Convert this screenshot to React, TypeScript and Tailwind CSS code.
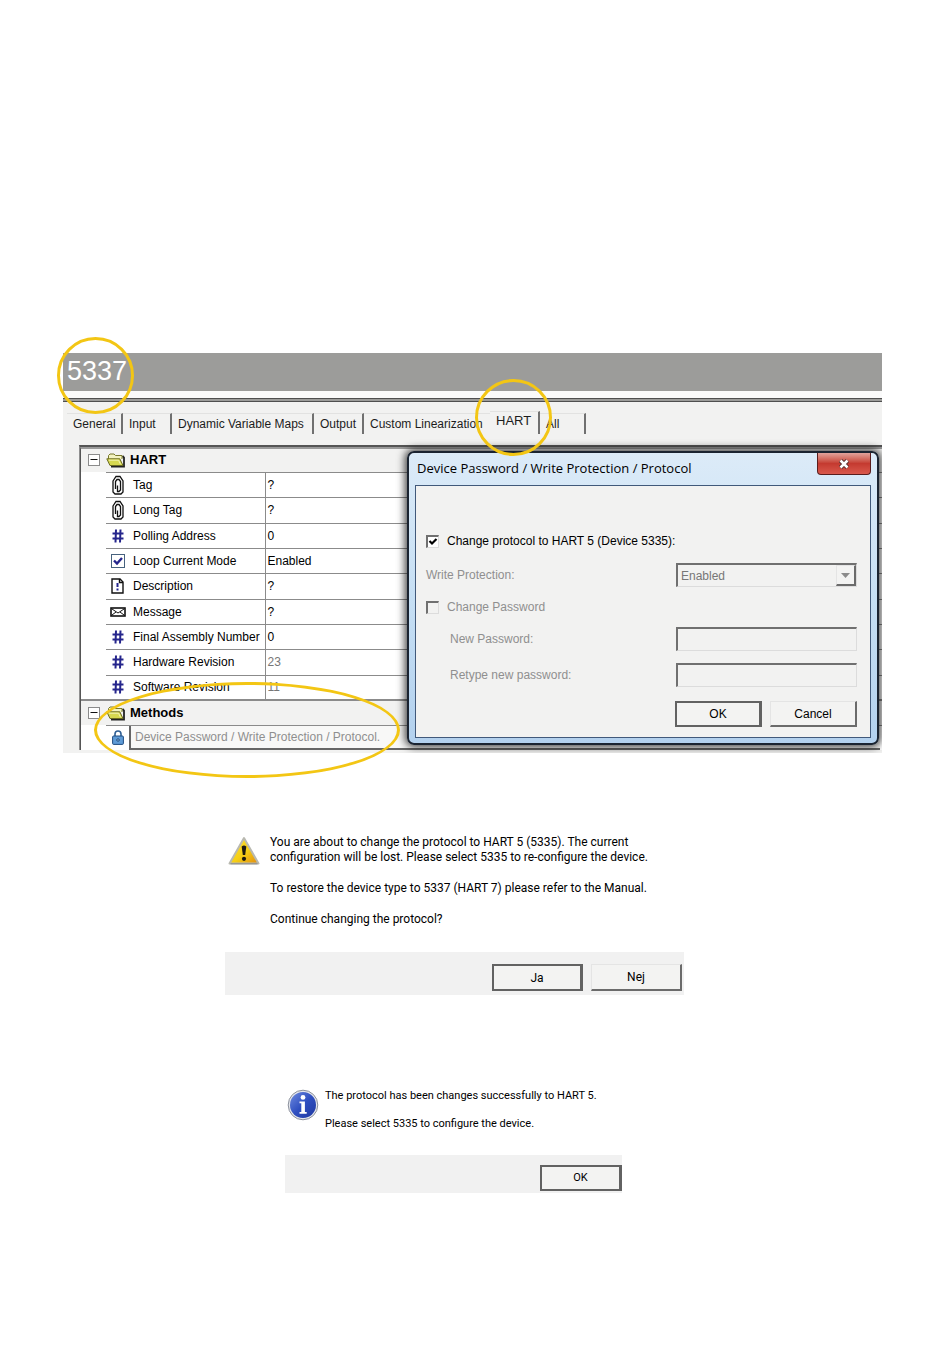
import type { ReactNode } from 'react';

const FolderIcon = () => (
    <svg width="20" height="16" viewBox="0 0 20 16" aria-hidden="true">
        <path d="M5 14.5 18 14.5 18 5.5 16.5 4" fill="none" stroke="#222" strokeWidth="1.8" />
        <path d="M2.5 7V3.5L4 2h4l1.5 1.5h6.5V7" fill="#f3f3c0" stroke="#77772a" />
        <path d="M.8 6.8h13l3.2 6.7H4z" fill="#d6d850" stroke="#6b6b22" />
        <path d="M3 8.2h9.5l2 4" fill="none" stroke="#f4f4b4" />
    </svg>
);

const ClipIcon = () => (
    <svg width="12" height="20" viewBox="0 0 12 20" fill="none" stroke="#111" aria-hidden="true">
        <path d="M1 6 4 1.5h4L11 6v11l-2 2H3l-2-2z" strokeWidth="1.3" />
        <path d="M3.5 14V6.5L5 4.5h2l1.5 2V15l-1.5 1.5H5.5v-6" strokeWidth="1.3" />
    </svg>
);

const HashIcon = () => (
    <svg width="12" height="14" viewBox="0 0 12 14" fill="none" stroke="#25258c" strokeWidth="2" aria-hidden="true">
        <path d="M4 .5 3.5 13.5M8.5 .5 8 13.5M.5 4.5h11M.5 9.5h11" />
    </svg>
);

const TickIcon = () => (
    <svg width="14" height="14" viewBox="0 0 14 14" fill="none" aria-hidden="true">
        <rect x=".5" y=".5" width="13" height="13" fill="#fff" stroke="#47627e" />
        <path d="m3 6.5 3 3 5-5.5" stroke="#25258c" strokeWidth="2.4" />
    </svg>
);

const NoteIcon = () => (
    <svg width="13" height="16" viewBox="0 0 13 16" fill="none" stroke="#111" strokeWidth="1.4" aria-hidden="true">
        <path d="M1 1h8l3 3v11H1z" />
        <path d="M8.5 1v3.5H12" />
        <path d="M6.5 5v4M6.5 10.5v2" stroke="#25258c" strokeWidth="2" />
    </svg>
);

const MailIcon = () => (
    <svg width="16" height="10" viewBox="0 0 16 10" fill="none" stroke="#111" aria-hidden="true">
        <rect x="1" y="1" width="14" height="8" strokeWidth="1.6" />
        <path d="m2 2 6 4 6-4M2 8l4-3M14 8l-4-3" />
    </svg>
);

const LockIcon = () => (
    <svg width="12" height="15" viewBox="0 0 12 15" fill="none" aria-hidden="true">
        <path d="M3 7V4a3 3 0 0 1 6 0v3" stroke="#2f5f94" strokeWidth="1.6" />
        <rect x=".6" y="6" width="10.8" height="8.4" rx="1" fill="#5f9bd6" stroke="#1f4c80" />
        <path d="M6 8.5 7.5 10 6 11.5 4.5 10z" fill="#8fbfeb" stroke="#173d6b" />
    </svg>
);

const MinusBox = () => (
    <svg width="12" height="12" viewBox="0 0 12 12" aria-hidden="true">
        <rect x=".5" y=".5" width="11" height="11" fill="#fff" stroke="#8b8b8b" />
        <path d="M2.5 5.5h7" stroke="#111" />
    </svg>
);

const WarningIcon = () => (
    <svg width="32" height="30" viewBox="0 0 32 30" aria-hidden="true">
        <defs>
            <linearGradient id="warn" x1="0" y1="0" x2="1" y2="1">
                <stop offset="0" stopColor="#fbe23c" />
                <stop offset=".55" stopColor="#f6cf14" />
                <stop offset="1" stopColor="#e08a10" />
            </linearGradient>
        </defs>
        <path d="M16 2 30.5 27.5h-29z" fill="url(#warn)" stroke="#b9b9b0" strokeWidth="2" strokeLinejoin="round" />
        <path d="M2.5 27.8h27" stroke="#8a8a86" />
        <path d="M13.7 10.5q2.3-2 4.6 0L17.2 19h-2.4z" fill="#1d1a10" />
        <circle cx="16" cy="22.8" r="2.1" fill="#1d1a10" />
    </svg>
);

const InfoIcon = () => (
    <svg width="32" height="32" viewBox="0 0 32 32" aria-hidden="true">
        <defs>
            <linearGradient id="info" x1="0" y1="0" x2="1" y2="1">
                <stop offset="0" stopColor="#6f8ce0" />
                <stop offset=".5" stopColor="#2f4fc0" />
                <stop offset="1" stopColor="#1f38a0" />
            </linearGradient>
        </defs>
        <circle cx="16" cy="16" r="14.8" fill="#e4e6ec" stroke="#8c919c" />
        <circle cx="16" cy="16" r="13" fill="url(#info)" />
        <circle cx="16" cy="8.4" r="2.4" fill="#fff" />
        <path d="M12.5 12.5h5.4v10.5h1.8v1.8h-7.2v-1.8h1.8v-8.7h-1.8z" fill="#fff" />
    </svg>
);

const tabs = [
    { label: 'General', className: 'w-14 border-r-2' },
    { label: 'Input', className: 'w-[49px] border-r-2' },
    { label: 'Dynamic Variable Maps', className: 'w-[142px] border-r-2' },
    { label: 'Output', className: 'w-[50px] border-r-2' },
    { label: 'Custom Linearization', className: 'w-[126px]' },
    { label: 'HART', className: 'w-[50px] border-r-2 pb-1 text-[13px]', active: true },
    { label: 'All', className: 'w-[46px] border-r-2' },
];

const rows = [
    { icon: <ClipIcon />, name: 'Tag', value: '?' },
    { icon: <ClipIcon />, name: 'Long Tag', value: '?' },
    { icon: <HashIcon />, name: 'Polling Address', value: '0' },
    { icon: <TickIcon />, name: 'Loop Current Mode', value: 'Enabled' },
    { icon: <NoteIcon />, name: 'Description', value: '?' },
    { icon: <MailIcon />, name: 'Message', value: '?' },
    { icon: <HashIcon />, name: 'Final Assembly Number', value: '0' },
    { icon: <HashIcon />, name: 'Hardware Revision', value: '23', readOnly: true },
    { icon: <HashIcon />, name: 'Software Revision', value: '11', readOnly: true },
];

const GroupHeading = ({ children }: { children: ReactNode }) => (
    <th colSpan={4} scope="colgroup" className="bg-[#f2f2f1] text-left text-[13px] font-bold">
        <div className="flex items-center pl-[7px]">
            <MinusBox />
            <span className="ml-1.5 mr-1">
                <FolderIcon />
            </span>
            {children}
        </div>
    </th>
);

const ParameterTable = () => (
    <table className="w-full table-fixed border-collapse bg-white text-black">
        <colgroup>
            <col className="w-[25px]" />
            <col className="w-[25px]" />
            <col className="w-[134px]" />
            <col />
        </colgroup>
        <tbody>
            <tr className="h-[23px]">
                <GroupHeading>HART</GroupHeading>
            </tr>
            {rows.map((row) => (
                <tr key={row.name} className="h-[25px] nth-[3n]:h-[26px]">
                    <td />
                    <td className="border-t border-[#8b8b8b] pr-0.5">
                        <div className="flex justify-center">{row.icon}</div>
                    </td>
                    <th scope="row" className="whitespace-nowrap border-t border-[#8b8b8b] pl-0.5 text-left font-normal">
                        {row.name}
                    </th>
                    <td className={`border-l border-t border-[#8b8b8b] pl-0.5 ${row.readOnly ? 'text-[#777]' : ''}`}>
                        {row.value}
                    </td>
                </tr>
            ))}
            <tr className="h-[25px] border-t-2 border-[#8b8b8b]">
                <GroupHeading>Methods</GroupHeading>
            </tr>
            <tr className="h-[25px]">
                <td />
                <td className="border-t border-[#8b8b8b] pr-0.5">
                    <div className="flex justify-center">
                        <LockIcon />
                    </div>
                </td>
                <td colSpan={2} className="border-t border-[#8b8b8b] p-0">
                    <button
                        type="button"
                        className="-ml-0.5 block h-6 w-full border-b-2 border-l-2 border-[#666] bg-[#f8f8f7] pl-1 text-left text-[#8f8f8f]"
                    >
                        Device Password / Write Protection / Protocol.
                    </button>
                </td>
            </tr>
        </tbody>
    </table>
);

const sunken = 'border-l-2 border-t-2 border-r border-b border-l-[#707070] border-t-[#707070] border-r-[#dcdcdc] border-b-[#dcdcdc]';
const raised = 'border-r-2 border-b-2 border-l border-t border-r-[#6b6b6b] border-b-[#6b6b6b] border-l-[#e4e4e4] border-t-[#e4e4e4] bg-[#f3f3f2]';
const raisedDefault = 'border-r-3 border-b-2 border-l-2 border-t-2 border-[#626262] bg-[#f3f3f2]';

const PasswordDialog = () => (
    <form
        role="dialog"
        aria-labelledby="dialog-title"
        className="absolute left-[344px] right-[3px] top-[98px] rounded-[7px] border-2 border-[#1b2431] bg-linear-to-b from-[#dcebf8] via-[#c6dff4] to-[#b3d1ee] px-1.5 pb-[5px] shadow-[0_0_8px_2px_rgba(0,0,0,0.75)]"
    >
        <div className="flex h-8 items-start justify-between">
            <h2 id="dialog-title" className="pl-0.5 pt-1.5 font-['Open_Sans',sans-serif] text-[13px] leading-[18px] text-black">
                Device Password / Write Protection / Protocol
            </h2>
            <button
                type="button"
                aria-label="Close"
                className="flex h-[22px] w-[54px] items-center justify-center rounded-b-[4px] border border-t-0 border-[#5a1d1d] bg-linear-to-b from-[#e0a39c] via-[#c43a30] to-[#d9584c]"
            >
                <svg width="14" height="12" viewBox="0 0 14 12" aria-hidden="true">
                    <path d="m3.5 2.5 7 7m0-7-7 7" stroke="#4a2a2a" strokeWidth="4.4" />
                    <path d="m3.5 2.5 7 7m0-7-7 7" stroke="#fff" strokeWidth="2.6" />
                </svg>
            </button>
        </div>
        <div className="border border-[#41597a] bg-[#f2f2f1] pb-2.5 pl-2.5 pr-[13px] pt-[43px] text-[#8f8f8f]">
            <div className="flex h-6 items-center text-black">
                <label className="flex items-center gap-2">
                    <span className="relative flex">
                        <input type="checkbox" defaultChecked className={`peer h-[13px] w-[13px] appearance-none bg-white ${sunken}`} />
                        <svg width="13" height="13" viewBox="0 0 13 13" fill="none" className="pointer-events-none absolute inset-0 hidden peer-checked:block" aria-hidden="true">
                            <path d="m3.5 6 2.5 2.5 4.5-4.5" stroke="#000" strokeWidth="2.2" />
                        </svg>
                    </span>
                    Change protocol to HART 5 (Device 5335):
                </label>
            </div>
            <div className="mt-2.5 flex h-6 items-center justify-between">
                <label htmlFor="write-protection">Write Protection:</label>
                <span className="relative block w-[181px]">
                    <select id="write-protection" disabled className={`block h-6 w-full appearance-none bg-[#f2f2f1] pl-[3px] text-[#777] opacity-100 ${sunken}`}>
                        <option>Enabled</option>
                    </select>
                    <span className={`pointer-events-none absolute bottom-px right-px top-0.5 flex w-5 items-center justify-center ${raised}`}>
                        <svg width="9" height="5" viewBox="0 0 9 5" aria-hidden="true">
                            <path d="M0 0h9L4.5 5z" fill="#8b8b8b" />
                        </svg>
                    </span>
                </span>
            </div>
            <div className="mt-2 flex h-6 items-center">
                <label className="flex items-center gap-2">
                    <input type="checkbox" disabled className={`h-[13px] w-[13px] appearance-none ${sunken}`} />
                    Change Password
                </label>
            </div>
            <div className="mt-2 flex h-6 items-center justify-between pl-6">
                <label htmlFor="new-password">New Password:</label>
                <input id="new-password" type="password" disabled className={`h-6 w-[181px] px-1 ${sunken}`} />
            </div>
            <div className="mt-3 flex h-6 items-center justify-between pl-6">
                <label htmlFor="retype-password">Retype new password:</label>
                <input id="retype-password" type="password" disabled className={`h-6 w-[181px] px-1 ${sunken}`} />
            </div>
            <div className="mt-3.5 flex justify-end gap-2 text-black">
                <button type="button" className={`h-[26px] w-[87px] ${raisedDefault}`}>
                    OK
                </button>
                <button type="button" className={`h-[26px] w-[87px] ${raised}`}>
                    Cancel
                </button>
            </div>
        </div>
    </form>
);

export default function App() {
    return (
        <main className="min-h-screen bg-white pb-[172px] pl-[63px] pr-[68px] pt-[353px] font-['Liberation_Sans',Arial,sans-serif] text-[12px] leading-4 text-[#1c1c1c]">
            <div className="relative">
                <section className="relative overflow-hidden bg-[#f2f2f1]">
                    <h1 className="h-[38px] bg-[#9c9c9a] pl-1 text-[27px] leading-9 text-white">5337</h1>
                    <div className="h-[7px] bg-[#fafafa]" />
                    <div className="h-1 border-y border-[#4f4f4f] bg-[#9c9c9a]" />
                    <nav className="flex items-end pb-[11px] pl-1 pt-[9px]">
                        {tabs.map((tab) => (
                            <button
                                key={tab.label}
                                type="button"
                                aria-pressed={!!tab.active}
                                className={`${tab.className} ${tab.active ? 'h-[23px]' : 'h-[21px]'} whitespace-nowrap border-t border-[#707070] border-t-[#e2e2e1] pl-1.5 text-left`}
                            >
                                {tab.label}
                            </button>
                        ))}
                    </nav>
                    <div className="pb-[3px] pl-4">
                        <div className="border-l border-t-2 border-l-[#8f8f8f] border-t-[#555]">
                            <div className="border-l border-t-2 border-l-[#555] border-t-[#9a9a9a]">
                                <ParameterTable />
                            </div>
                        </div>
                    </div>
                    <PasswordDialog />
                </section>
                {/* highlight rings */}
                <div className="pointer-events-none absolute -left-1.5 -top-4 h-[77px] w-[77px] rounded-full border-3 border-[#f3c614]" />
                <div className="pointer-events-none absolute left-[412px] top-[26px] h-[77px] w-[77px] rounded-full border-3 border-[#f3c614]" />
                <div className="pointer-events-none absolute left-[31px] top-[329px] h-24 w-[306px] rounded-[50%] border-3 border-[#f3c614]" />
            </div>

            <section className="ml-[162px] mt-[82px] max-w-[459px] font-[Roboto,sans-serif] text-black">
                <div className="flex gap-2.5 pl-[3px]">
                    <span className="mt-px shrink-0">
                        <WarningIcon />
                    </span>
                    <div className="flex flex-col gap-4 leading-[15px]">
                        <p>
                            You are about to change the protocol to HART 5 (5335). The current
                            <br />
                            configuration will be lost. Please select 5335 to re-configure the device.
                        </p>
                        <p>To restore the device type to 5337 (HART 7) please refer to the Manual.</p>
                        <p>Continue changing the protocol?</p>
                    </div>
                </div>
                <div className="mt-[25px] flex justify-end gap-2 bg-[#f1f1f1] pb-1 pr-0.5 pt-3">
                    <button type="button" className={`h-[27px] w-[91px] ${raisedDefault}`}>
                        Ja
                    </button>
                    <button type="button" className={`h-[27px] w-[91px] ${raised}`}>
                        Nej
                    </button>
                </div>
            </section>

            <section className="ml-[222px] mt-[94px] max-w-[337px] font-[Roboto,sans-serif] text-[11px] text-black">
                <div className="flex gap-1.5 pl-0.5">
                    <span className="shrink-0">
                        <InfoIcon />
                    </span>
                    <div className="flex flex-col gap-3.5 whitespace-nowrap leading-[14px]">
                        <p>The protocol has been changes successfully to HART 5.</p>
                        <p>Please select 5335 to configure the device.</p>
                    </div>
                </div>
                <div className="mt-6 flex justify-end bg-[#f1f1f1] pb-0.5 pt-2.5">
                    <button type="button" className={`h-[26px] w-[82px] ${raisedDefault}`}>
                        OK
                    </button>
                </div>
            </section>
        </main>
    );
}
